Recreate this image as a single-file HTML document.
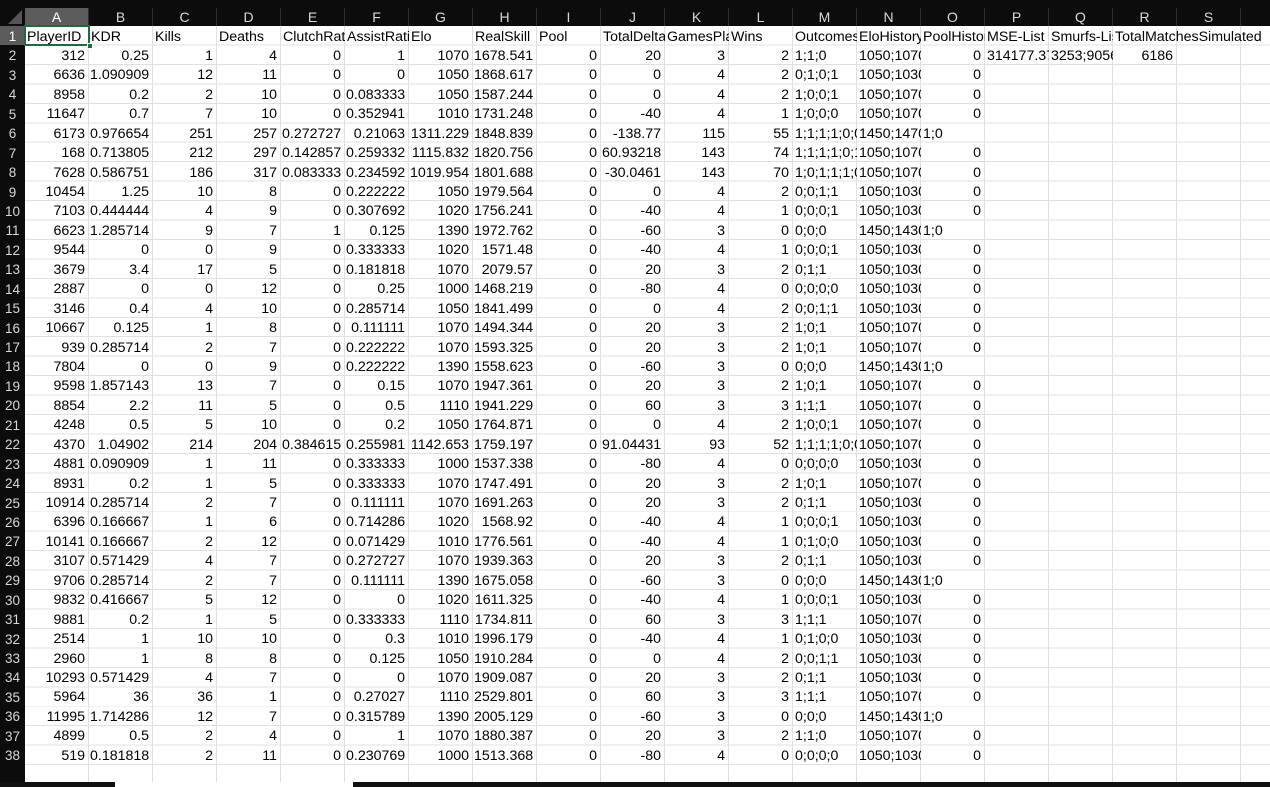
<!DOCTYPE html>
<html><head><meta charset="utf-8"><style>
*{margin:0;padding:0;box-sizing:border-box}
body{width:1270px;height:787px;overflow:hidden;background:#fff;font-family:"Liberation Sans",Arial,sans-serif;position:relative}
#top{position:absolute;left:0;top:0;width:1270px;height:26px;background:#0c0c0c}
#cols{position:absolute;left:25px;top:8px;height:18px;display:flex}
#cols span{width:64px;flex:none;text-align:center;color:#d8d8d8;font-size:14px;line-height:18px;border-right:1px solid #2e2e2e}
#cols span.sel{background:#5c5c5c;color:#fff}
#corner{position:absolute;left:8px;top:10px;width:0;height:0;border-left:14px solid transparent;border-bottom:14px solid #555}
#rn{position:absolute;left:0;top:26px;width:25px;height:761px;background:#0c0c0c}
#rn div{height:19.45px;line-height:19.45px;padding-top:1px;text-align:center;color:#d8d8d8;font-size:13.5px}
#rn div.sel{background:#5c5c5c;color:#fff}
#grid{position:absolute;left:25px;top:26px;width:1245px;height:756px;
background-image:repeating-linear-gradient(to right,transparent 0,transparent 63px,#e0e0e0 63px,#e0e0e0 64px),repeating-linear-gradient(to bottom,transparent 0,transparent 18.45px,#e0e0e0 18.45px,#e0e0e0 19.45px)}
.r{height:19.45px;display:flex;font-size:14.2px;line-height:19px;padding-top:1.5px;color:#000}
.r span{width:64px;flex:none;overflow:hidden;white-space:nowrap;text-align:right;padding:0 4px 0 1px}
.r span:nth-child(13),.r span:nth-child(14),.r span.t{text-align:left;padding:0 0 0 2px}
.h span{text-align:left;padding:0 0 0 2px}
.r span.ov{overflow:visible}
#a1{position:absolute;left:24px;top:25px;width:66px;height:21px;border:2px solid #1e6b3e}
#a1 i{position:absolute;right:-5px;bottom:-5px;width:6px;height:6px;background:#1e6b3e;border:1px solid #fff}
#bot{position:absolute;left:0;top:782px;width:1270px;height:5px;background:#111}
#bot i{position:absolute;left:115px;top:0;width:238px;height:5px;background:#fff}
</style></head><body>
<div id="grid">
<div class="r h"><span>PlayerID</span><span>KDR</span><span>Kills</span><span>Deaths</span><span>ClutchRatio</span><span>AssistRatio</span><span>Elo</span><span>RealSkill</span><span>Pool</span><span>TotalDelta</span><span>GamesPlayed</span><span>Wins</span><span>Outcomes</span><span>EloHistory</span><span>PoolHistory</span><span>MSE-List</span><span>Smurfs-List</span><span class="ov">TotalMatchesSimulated</span></div>
<div class="r"><span>312</span><span>0.25</span><span>1</span><span>4</span><span>0</span><span>1</span><span>1070</span><span>1678.541</span><span>0</span><span>20</span><span>3</span><span>2</span><span>1;1;0</span><span>1050;1070;1090</span><span>0</span><span class="t">314177.375</span><span class="t">3253;9056;1</span><span>6186</span></div>
<div class="r"><span>6636</span><span>1.090909</span><span>12</span><span>11</span><span>0</span><span>0</span><span>1050</span><span>1868.617</span><span>0</span><span>0</span><span>4</span><span>2</span><span>0;1;0;1</span><span>1050;1030;1</span><span>0</span></div>
<div class="r"><span>8958</span><span>0.2</span><span>2</span><span>10</span><span>0</span><span>0.083333</span><span>1050</span><span>1587.244</span><span>0</span><span>0</span><span>4</span><span>2</span><span>1;0;0;1</span><span>1050;1070;1</span><span>0</span></div>
<div class="r"><span>11647</span><span>0.7</span><span>7</span><span>10</span><span>0</span><span>0.352941</span><span>1010</span><span>1731.248</span><span>0</span><span>-40</span><span>4</span><span>1</span><span>1;0;0;0</span><span>1050;1070;1</span><span>0</span></div>
<div class="r"><span>6173</span><span>0.976654</span><span>251</span><span>257</span><span>0.272727</span><span>0.21063</span><span>1311.229</span><span>1848.839</span><span>0</span><span>-138.77</span><span>115</span><span>55</span><span>1;1;1;1;0;0;1</span><span>1450;1470;1</span><span class="t">1;0</span></div>
<div class="r"><span>168</span><span>0.713805</span><span>212</span><span>297</span><span>0.142857</span><span>0.259332</span><span>1115.832</span><span>1820.756</span><span>0</span><span>60.93218</span><span>143</span><span>74</span><span>1;1;1;1;0;1;1</span><span>1050;1070;1</span><span>0</span></div>
<div class="r"><span>7628</span><span>0.586751</span><span>186</span><span>317</span><span>0.083333</span><span>0.234592</span><span>1019.954</span><span>1801.688</span><span>0</span><span>-30.0461</span><span>143</span><span>70</span><span>1;0;1;1;1;0;1</span><span>1050;1070;1</span><span>0</span></div>
<div class="r"><span>10454</span><span>1.25</span><span>10</span><span>8</span><span>0</span><span>0.222222</span><span>1050</span><span>1979.564</span><span>0</span><span>0</span><span>4</span><span>2</span><span>0;0;1;1</span><span>1050;1030;1</span><span>0</span></div>
<div class="r"><span>7103</span><span>0.444444</span><span>4</span><span>9</span><span>0</span><span>0.307692</span><span>1020</span><span>1756.241</span><span>0</span><span>-40</span><span>4</span><span>1</span><span>0;0;0;1</span><span>1050;1030;1</span><span>0</span></div>
<div class="r"><span>6623</span><span>1.285714</span><span>9</span><span>7</span><span>1</span><span>0.125</span><span>1390</span><span>1972.762</span><span>0</span><span>-60</span><span>3</span><span>0</span><span>0;0;0</span><span>1450;1430;1</span><span class="t">1;0</span></div>
<div class="r"><span>9544</span><span>0</span><span>0</span><span>9</span><span>0</span><span>0.333333</span><span>1020</span><span>1571.48</span><span>0</span><span>-40</span><span>4</span><span>1</span><span>0;0;0;1</span><span>1050;1030;1</span><span>0</span></div>
<div class="r"><span>3679</span><span>3.4</span><span>17</span><span>5</span><span>0</span><span>0.181818</span><span>1070</span><span>2079.57</span><span>0</span><span>20</span><span>3</span><span>2</span><span>0;1;1</span><span>1050;1030;1</span><span>0</span></div>
<div class="r"><span>2887</span><span>0</span><span>0</span><span>12</span><span>0</span><span>0.25</span><span>1000</span><span>1468.219</span><span>0</span><span>-80</span><span>4</span><span>0</span><span>0;0;0;0</span><span>1050;1030;1</span><span>0</span></div>
<div class="r"><span>3146</span><span>0.4</span><span>4</span><span>10</span><span>0</span><span>0.285714</span><span>1050</span><span>1841.499</span><span>0</span><span>0</span><span>4</span><span>2</span><span>0;0;1;1</span><span>1050;1030;1</span><span>0</span></div>
<div class="r"><span>10667</span><span>0.125</span><span>1</span><span>8</span><span>0</span><span>0.111111</span><span>1070</span><span>1494.344</span><span>0</span><span>20</span><span>3</span><span>2</span><span>1;0;1</span><span>1050;1070;1</span><span>0</span></div>
<div class="r"><span>939</span><span>0.285714</span><span>2</span><span>7</span><span>0</span><span>0.222222</span><span>1070</span><span>1593.325</span><span>0</span><span>20</span><span>3</span><span>2</span><span>1;0;1</span><span>1050;1070;1</span><span>0</span></div>
<div class="r"><span>7804</span><span>0</span><span>0</span><span>9</span><span>0</span><span>0.222222</span><span>1390</span><span>1558.623</span><span>0</span><span>-60</span><span>3</span><span>0</span><span>0;0;0</span><span>1450;1430;1</span><span class="t">1;0</span></div>
<div class="r"><span>9598</span><span>1.857143</span><span>13</span><span>7</span><span>0</span><span>0.15</span><span>1070</span><span>1947.361</span><span>0</span><span>20</span><span>3</span><span>2</span><span>1;0;1</span><span>1050;1070;1</span><span>0</span></div>
<div class="r"><span>8854</span><span>2.2</span><span>11</span><span>5</span><span>0</span><span>0.5</span><span>1110</span><span>1941.229</span><span>0</span><span>60</span><span>3</span><span>3</span><span>1;1;1</span><span>1050;1070;1</span><span>0</span></div>
<div class="r"><span>4248</span><span>0.5</span><span>5</span><span>10</span><span>0</span><span>0.2</span><span>1050</span><span>1764.871</span><span>0</span><span>0</span><span>4</span><span>2</span><span>1;0;0;1</span><span>1050;1070;1</span><span>0</span></div>
<div class="r"><span>4370</span><span>1.04902</span><span>214</span><span>204</span><span>0.384615</span><span>0.255981</span><span>1142.653</span><span>1759.197</span><span>0</span><span>91.04431</span><span>93</span><span>52</span><span>1;1;1;1;0;0;1</span><span>1050;1070;1</span><span>0</span></div>
<div class="r"><span>4881</span><span>0.090909</span><span>1</span><span>11</span><span>0</span><span>0.333333</span><span>1000</span><span>1537.338</span><span>0</span><span>-80</span><span>4</span><span>0</span><span>0;0;0;0</span><span>1050;1030;1</span><span>0</span></div>
<div class="r"><span>8931</span><span>0.2</span><span>1</span><span>5</span><span>0</span><span>0.333333</span><span>1070</span><span>1747.491</span><span>0</span><span>20</span><span>3</span><span>2</span><span>1;0;1</span><span>1050;1070;1</span><span>0</span></div>
<div class="r"><span>10914</span><span>0.285714</span><span>2</span><span>7</span><span>0</span><span>0.111111</span><span>1070</span><span>1691.263</span><span>0</span><span>20</span><span>3</span><span>2</span><span>0;1;1</span><span>1050;1030;1</span><span>0</span></div>
<div class="r"><span>6396</span><span>0.166667</span><span>1</span><span>6</span><span>0</span><span>0.714286</span><span>1020</span><span>1568.92</span><span>0</span><span>-40</span><span>4</span><span>1</span><span>0;0;0;1</span><span>1050;1030;1</span><span>0</span></div>
<div class="r"><span>10141</span><span>0.166667</span><span>2</span><span>12</span><span>0</span><span>0.071429</span><span>1010</span><span>1776.561</span><span>0</span><span>-40</span><span>4</span><span>1</span><span>0;1;0;0</span><span>1050;1030;1</span><span>0</span></div>
<div class="r"><span>3107</span><span>0.571429</span><span>4</span><span>7</span><span>0</span><span>0.272727</span><span>1070</span><span>1939.363</span><span>0</span><span>20</span><span>3</span><span>2</span><span>0;1;1</span><span>1050;1030;1</span><span>0</span></div>
<div class="r"><span>9706</span><span>0.285714</span><span>2</span><span>7</span><span>0</span><span>0.111111</span><span>1390</span><span>1675.058</span><span>0</span><span>-60</span><span>3</span><span>0</span><span>0;0;0</span><span>1450;1430;1</span><span class="t">1;0</span></div>
<div class="r"><span>9832</span><span>0.416667</span><span>5</span><span>12</span><span>0</span><span>0</span><span>1020</span><span>1611.325</span><span>0</span><span>-40</span><span>4</span><span>1</span><span>0;0;0;1</span><span>1050;1030;1</span><span>0</span></div>
<div class="r"><span>9881</span><span>0.2</span><span>1</span><span>5</span><span>0</span><span>0.333333</span><span>1110</span><span>1734.811</span><span>0</span><span>60</span><span>3</span><span>3</span><span>1;1;1</span><span>1050;1070;1</span><span>0</span></div>
<div class="r"><span>2514</span><span>1</span><span>10</span><span>10</span><span>0</span><span>0.3</span><span>1010</span><span>1996.179</span><span>0</span><span>-40</span><span>4</span><span>1</span><span>0;1;0;0</span><span>1050;1030;1</span><span>0</span></div>
<div class="r"><span>2960</span><span>1</span><span>8</span><span>8</span><span>0</span><span>0.125</span><span>1050</span><span>1910.284</span><span>0</span><span>0</span><span>4</span><span>2</span><span>0;0;1;1</span><span>1050;1030;1</span><span>0</span></div>
<div class="r"><span>10293</span><span>0.571429</span><span>4</span><span>7</span><span>0</span><span>0</span><span>1070</span><span>1909.087</span><span>0</span><span>20</span><span>3</span><span>2</span><span>0;1;1</span><span>1050;1030;1</span><span>0</span></div>
<div class="r"><span>5964</span><span>36</span><span>36</span><span>1</span><span>0</span><span>0.27027</span><span>1110</span><span>2529.801</span><span>0</span><span>60</span><span>3</span><span>3</span><span>1;1;1</span><span>1050;1070;1</span><span>0</span></div>
<div class="r"><span>11995</span><span>1.714286</span><span>12</span><span>7</span><span>0</span><span>0.315789</span><span>1390</span><span>2005.129</span><span>0</span><span>-60</span><span>3</span><span>0</span><span>0;0;0</span><span>1450;1430;1</span><span class="t">1;0</span></div>
<div class="r"><span>4899</span><span>0.5</span><span>2</span><span>4</span><span>0</span><span>1</span><span>1070</span><span>1880.387</span><span>0</span><span>20</span><span>3</span><span>2</span><span>1;1;0</span><span>1050;1070;1</span><span>0</span></div>
<div class="r"><span>519</span><span>0.181818</span><span>2</span><span>11</span><span>0</span><span>0.230769</span><span>1000</span><span>1513.368</span><span>0</span><span>-80</span><span>4</span><span>0</span><span>0;0;0;0</span><span>1050;1030;1</span><span>0</span></div>
</div>
<div id="top"></div>
<div id="corner"></div>
<div id="cols"><span class="sel">A</span><span>B</span><span>C</span><span>D</span><span>E</span><span>F</span><span>G</span><span>H</span><span>I</span><span>J</span><span>K</span><span>L</span><span>M</span><span>N</span><span>O</span><span>P</span><span>Q</span><span>R</span><span>S</span><span></span></div>
<div id="rn"><div class="sel">1</div><div>2</div><div>3</div><div>4</div><div>5</div><div>6</div><div>7</div><div>8</div><div>9</div><div>10</div><div>11</div><div>12</div><div>13</div><div>14</div><div>15</div><div>16</div><div>17</div><div>18</div><div>19</div><div>20</div><div>21</div><div>22</div><div>23</div><div>24</div><div>25</div><div>26</div><div>27</div><div>28</div><div>29</div><div>30</div><div>31</div><div>32</div><div>33</div><div>34</div><div>35</div><div>36</div><div>37</div><div>38</div></div>
<div id="a1"><i></i></div>
<div id="bot"><i></i></div>
</body></html>
